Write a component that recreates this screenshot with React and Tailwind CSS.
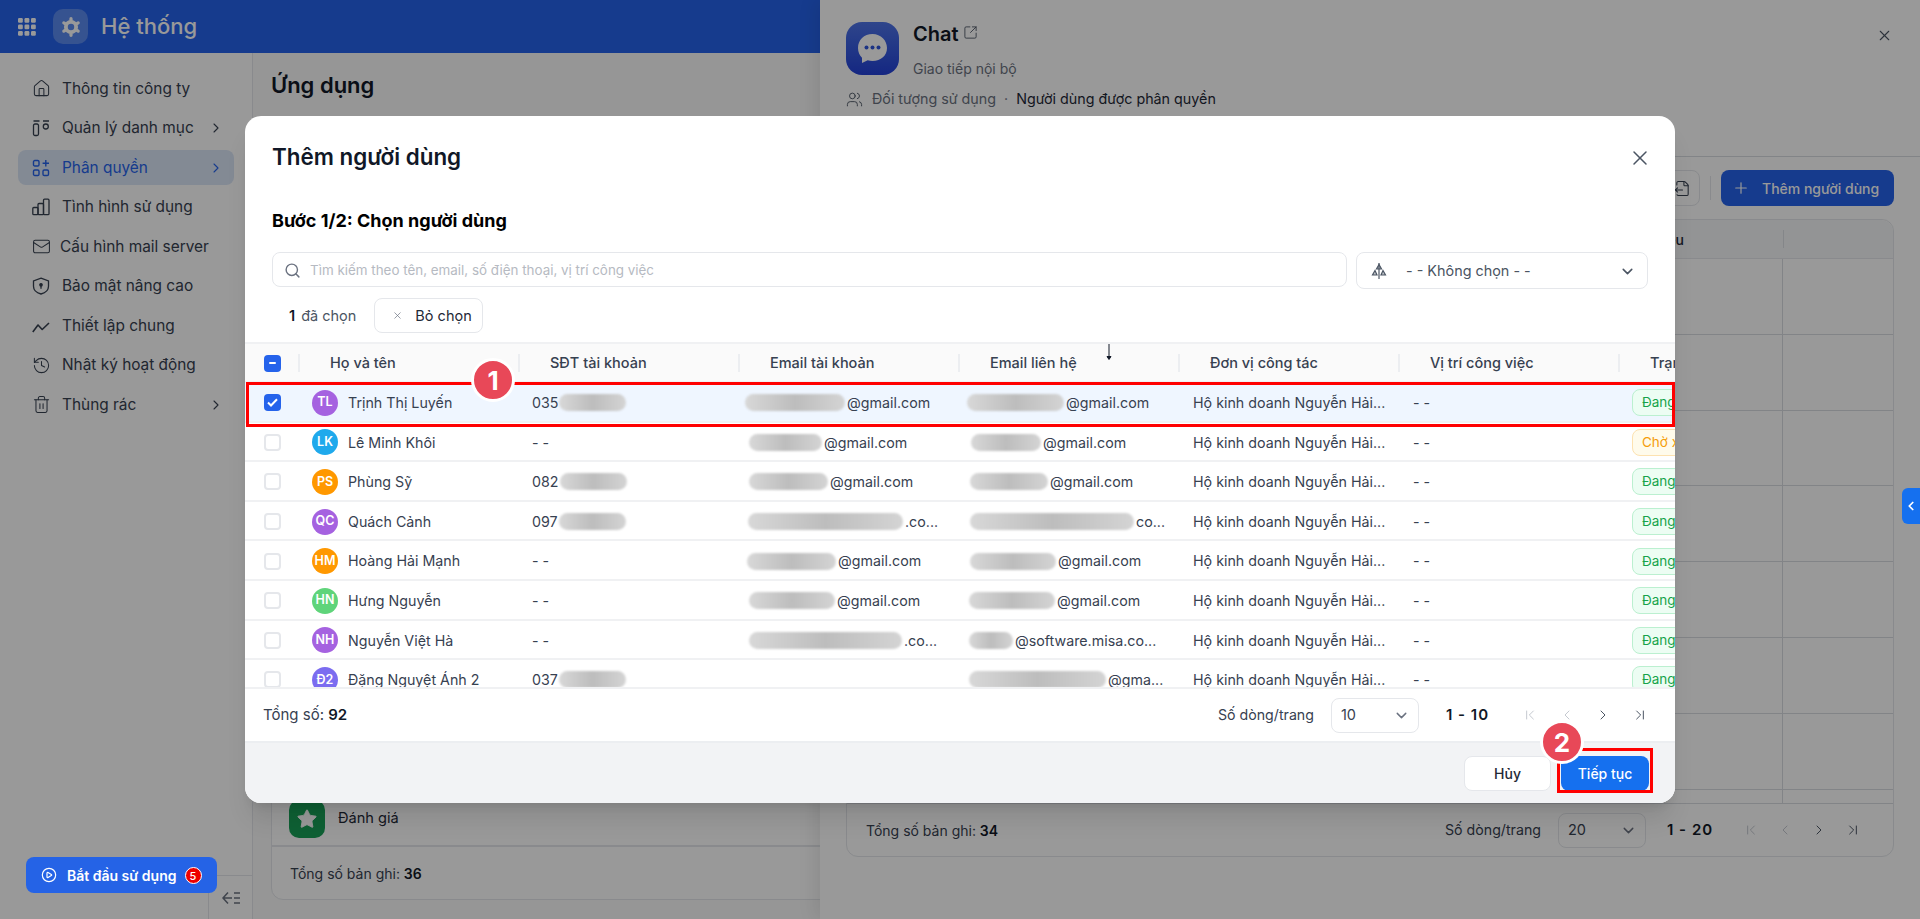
import {
  ChevronDown,
  ChevronFirst,
  ChevronLast,
  ChevronLeft,
  ChevronRight,
  CirclePlay,
  FileOutput,
  History,
  House,
  Mail,
  Plus,
  Search,
  SquareArrowOutUpRight,
  Star,
  Trash2,
  Users,
  X,
} from "lucide-react";

function GridDots() {
  return (
    <svg width="18" height="18" viewBox="0 0 18 18" fill="currentColor">
      {[0, 6.5, 13].map((y) =>
        [0, 6.5, 13].map((x) => <rect key={`${x}-${y}`} x={x} y={y} width="4.8" height="4.8" rx="1.2" />)
      )}
    </svg>
  );
}

function CatalogIcon() {
  return (
    <svg width="18" height="18" viewBox="0 0 18 18" fill="none" stroke="currentColor" strokeWidth="1.3">
      <path d="M1.5 2h6M11 2h6" />
      <rect x="1.5" y="5" width="5" height="11.5" rx="1.5" />
      <circle cx="13.8" cy="7.5" r="2.5" />
    </svg>
  );
}

function PermissionIcon() {
  return (
    <svg width="18" height="18" viewBox="0 0 18 18" fill="none" stroke="currentColor" strokeWidth="1.4">
      <rect x="1.5" y="1.5" width="5.5" height="5.5" rx="1.3" />
      <rect x="1.5" y="11" width="5.5" height="5.5" rx="1.3" />
      <rect x="11" y="11" width="5.5" height="5.5" rx="1.3" />
      <path d="M13.8 1v6.5M10.6 4.2h6.4" />
    </svg>
  );
}

function BarsIcon() {
  return (
    <svg width="18" height="18" viewBox="0 0 18 18" fill="none" stroke="currentColor" strokeWidth="1.3">
      <rect x="0.8" y="9.5" width="5.2" height="7.2" rx="1" />
      <rect x="6" y="5.5" width="5.5" height="11.2" rx="1" />
      <rect x="11.5" y="1.2" width="5.5" height="15.5" rx="1" />
    </svg>
  );
}

function ShieldIcon() {
  return (
    <svg width="18" height="18" viewBox="0 0 18 18" fill="none" stroke="currentColor" strokeWidth="1.3">
      <path d="M9 1.2 16.5 4v5.2c0 3.9-3.2 6.6-7.5 7.8-4.3-1.2-7.5-3.9-7.5-7.8V4z" />
      <circle cx="9" cy="7.8" r="1.2" fill="currentColor" />
      <path d="M9 8.5v3.2" />
    </svg>
  );
}

function TrendIcon() {
  return (
    <svg width="18" height="18" viewBox="0 0 18 18" fill="none" stroke="currentColor" strokeWidth="1.6" strokeLinejoin="round">
      <path d="M0.8 15 6 8l4.200 4.500 6.800-6.500" />
    </svg>
  );
}

function GearLogo() {
  return (
    <svg width="22" height="22" viewBox="0 0 24 24" fill="none" stroke="currentColor" strokeLinecap="round">
      <circle cx="12" cy="12" r="5.600" strokeWidth="4.200" />
      <path d="M12 3v1.500M12 19.500V21M4.200 7.500l1.300.75M18.500 15.750l1.300.75M4.200 16.500l1.300-.75M18.500 8.250l1.300-.75" strokeWidth="3.600" />
    </svg>
  );
}

function CollapseIcon() {
  return (
    <svg width="18" height="14" viewBox="0 0 18 14" fill="none" stroke="currentColor" strokeWidth="1.5">
      <path d="M6 1.5 1 7l5 5.5M1 7h9M12 2h6M12 7h6M12 12h6" />
    </svg>
  );
}

function ChatLogo() {
  return (
    <svg width="33" height="33" viewBox="0 0 33 33">
      <path d="M16.5 2C8 2 2 8 2 16c0 4 1.500 7.300 4 9.800V31l5.700-2.800c1.500.5 3.100.8 4.800.8 8.500 0 14.500-5.500 14.500-13S25 2 16.500 2z" fill="#fff" />
      <circle cx="10.500" cy="15.500" r="2" fill="#2f55dc" />
      <circle cx="16.500" cy="15.500" r="2" fill="#2f55dc" />
      <circle cx="22.500" cy="15.500" r="2" fill="#2f55dc" />
    </svg>
  );
}

function OrgIcon() {
  return (
    <svg width="16" height="18" viewBox="0 0 16 18" fill="none" stroke="currentColor" strokeWidth="1.2">
      <path d="M8 1v16" />
      <path d="M8 2.500 5.500 7h5zM4 8.500 1.500 13h4.500zM12 8.500 14.500 13H10z" fill="currentColor" fillOpacity=".35" />
    </svg>
  );
}

const menu = [
  { label: "Thông tin công ty", icon: <House size={19} strokeWidth={1.3} /> },
  { label: "Quản lý danh mục", icon: <CatalogIcon />, arrow: true },
  { label: "Phân quyền", icon: <PermissionIcon />, arrow: true, active: true },
  { label: "Tình hình sử dụng", icon: <BarsIcon /> },
  { label: "Cấu hình mail server", icon: <Mail size={19} strokeWidth={1.3} />, tight: true },
  { label: "Bảo mật nâng cao", icon: <ShieldIcon /> },
  { label: "Thiết lập chung", icon: <TrendIcon /> },
  { label: "Nhật ký hoạt động", icon: <History size={19} strokeWidth={1.3} /> },
  { label: "Thùng rác", icon: <Trash2 size={19} strokeWidth={1.3} />, arrow: true },
];

const users = [
  { initials: "TL", color: "bg-[#a562e0]", name: "Trịnh Thị Luyến", phone: "035", acc: [7, 100, "@gmail.com"], mail: [9, 97, "@gmail.com"], status: "Đang sử dụng", selected: true },
  { initials: "LK", color: "bg-[#1fa9ec]", name: "Lê Minh Khôi", acc: [11, 73, "@gmail.com"], mail: [13, 70, "@gmail.com"], status: "Chờ xác nhận" },
  { initials: "PS", color: "bg-[#ff9800]", name: "Phùng Sỹ", phone: "082", acc: [11, 79, "@gmail.com"], mail: [12, 78, "@gmail.com"], status: "Đang sử dụng" },
  { initials: "QC", color: "bg-[#a562e0]", name: "Quách Cảnh", phone: "097", acc: [10, 155, ".co..."], mail: [12, 164, "co..."], status: "Đang sử dụng" },
  { initials: "HM", color: "bg-[#ff9800]", name: "Hoàng Hải Mạnh", acc: [9, 89, "@gmail.com"], mail: [12, 86, "@gmail.com"], status: "Đang sử dụng" },
  { initials: "HN", color: "bg-[#5fd47a]", name: "Hưng Nguyễn", acc: [11, 86, "@gmail.com"], mail: [11, 86, "@gmail.com"], status: "Đang sử dụng" },
  { initials: "NH", color: "bg-[#a562e0]", name: "Nguyễn Việt Hà", acc: [11, 153, ".co..."], mail: [11, 44, "@software.misa.co..."], status: "Đang sử dụng" },
  { initials: "Đ2", color: "bg-[#7b6cf0]", name: "Đặng Nguyệt Ánh 2", phone: "037", mail: [11, 137, "@gma..."], status: "Đang sử dụng" },
];

const columns = ["Họ và tên", "SĐT tài khoản", "Email tài khoản", "Email liên hệ", "Đơn vị công tác", "Vị trí công việc", "Trạng thái"];

function Smudge({ left, width }) {
  return (
    <span
      className="inline-block h-[17px] shrink-0 rounded-full bg-gradient-to-r from-[#d8d8d8] via-[#bdbdbd] to-[#d4d4d4] blur-[1px]"
      style={{ marginLeft: left, width }}
    />
  );
}

function MailCell({ value }) {
  return (
    <div className="flex w-[220px] shrink-0 items-center">
      {value && (
        <>
          <Smudge left={value[0]} width={value[1]} />
          <span className="ml-0.5 whitespace-nowrap">{value[2]}</span>
        </>
      )}
    </div>
  );
}

function UserRow({ user }) {
  const waiting = user.status.startsWith("Chờ");
  return (
    <div className={`flex h-[39.6px] shrink-0 items-center border-b-2 border-[#f0f1f3] pt-[2px] text-[14.25px] text-[#374151] ${user.selected ? "bg-[#eff6ff]" : "bg-white"}`}>
      <div className="flex w-[53px] shrink-0 justify-center pl-[2px]">
        {user.selected ? (
          <span className="grid h-[17px] w-[17px] place-items-center rounded-[4px] bg-[#2563eb] text-white">
            <svg width="11" height="9" viewBox="0 0 11 9" fill="none" stroke="currentColor" strokeWidth="2">
              <path d="M1 4.500 4 7.500 10 1.200" />
            </svg>
          </span>
        ) : (
          <span className="h-[17px] w-[17px] rounded-[4px] border-2 border-[#e5e7eb] bg-white" />
        )}
      </div>
      <div className="flex w-[220px] shrink-0 items-center gap-[10px] pl-[14px]">
        <span className={`grid h-[26px] w-[26px] place-items-center rounded-full text-[12.5px] font-semibold text-white ${user.color}`}>{user.initials}</span>
        <span className="whitespace-nowrap">{user.name}</span>
      </div>
      <div className="flex w-[220px] shrink-0 items-center pl-[14px]">
        {user.phone ? (
          <>
            <span>{user.phone}</span>
            <Smudge left={1} width={67} />
          </>
        ) : (
          <span>- -</span>
        )}
      </div>
      <MailCell value={user.acc} />
      <MailCell value={user.mail} />
      <div className="w-[220px] shrink-0 whitespace-nowrap pl-[15px]">Hộ kinh doanh Nguyễn Hải...</div>
      <div className="w-[220px] shrink-0 pl-[15px]">- -</div>
      <div className="w-[220px] shrink-0 pl-[14px]">
        <span className={`inline-block h-[27px] whitespace-nowrap rounded-lg border px-[9px] text-[13.5px] leading-[25px] ${waiting ? "border-[#fde2b0] bg-[#fffbeb] text-[#f59e0b]" : "border-[#bbf0d0] bg-[#ecfdf3] text-[#16a34a]"}`}>
          {user.status}
        </span>
      </div>
    </div>
  );
}

function Pager({ range, value, rangeClass, iconClass }) {
  return (
    <div className="flex items-center">
      <span className="mr-[17px] text-[14.2px] text-[#374151]">Số dòng/trang</span>
      <div className="flex h-[35px] w-[88px] items-center justify-between rounded-lg border border-[#e5e7eb] bg-white pl-[9px] pr-[8px] text-[14.5px] text-[#374151]">
        {value}
        <ChevronDown size={17} className="text-[#6b7280]" />
      </div>
      <span className={`w-[46px] whitespace-nowrap text-[15px] font-semibold tracking-[1px] text-[#111827] ${rangeClass}`}>{range}</span>
      <div className={`flex items-center ${iconClass}`}>
        <ChevronFirst size={16} strokeWidth={1.5} className="text-[#c5c9d0]" />
        <ChevronLeft size={16} strokeWidth={1.5} className="text-[#c5c9d0]" />
        <ChevronRight size={16} strokeWidth={1.5} className="text-[#4b5563]" />
        <ChevronLast size={16} strokeWidth={1.5} className="text-[#4b5563]" />
      </div>
    </div>
  );
}

function Sidebar() {
  return (
    <aside className="relative flex w-[253px] shrink-0 flex-col border-r border-[#e5e7eb] bg-white pt-[18px]">
      <nav className="flex flex-col gap-[4.500px] px-[18px]">
        {menu.map((item) => (
          <div
            key={item.label}
            className={`flex h-[35px] items-center rounded-lg pl-[14px] pr-[10px] text-[15.4px] ${item.active ? "bg-[#dbe6f7] text-[#2563eb]" : "text-[#374151]"}`}
          >
            <span className="w-[18px] shrink-0">{item.icon}</span>
            <span className={item.tight ? "ml-[10px]" : "ml-[12px]"}>{item.label}</span>
            {item.arrow && <ChevronRight size={16} strokeWidth={1.6} className="ml-auto" />}
          </div>
        ))}
      </nav>
      <div className="mt-auto flex h-[44px] w-[44px] items-center justify-center self-end border-l border-t border-[#e5e7eb] text-[#6b7280]">
        <CollapseIcon />
      </div>
    </aside>
  );
}

function MainArea() {
  return (
    <main className="flex min-w-0 flex-1 flex-col bg-[#fafafa] pb-[19px] pl-[18px] pr-[20px] pt-[16px]">
      <h1 className="text-[22px] font-semibold leading-[32px] text-[#111827]">Ứng dụng</h1>
      <div className="mt-auto rounded-b-xl border border-[#e5e7eb] bg-white">
        <div className="flex h-[60px] items-center gap-[13px] border-b-2 border-[#e5e7eb] pl-[17px] pt-[6px]">
          <span className="grid h-[38px] w-[36px] place-items-center rounded-[10px] bg-[#18a058] text-white">
            <Star size={22} fill="currentColor" strokeWidth={1} />
          </span>
          <span className="text-[14.6px] text-[#1f2937]">Đánh giá</span>
        </div>
        <div className="flex h-[52px] items-center pl-[18px] text-[14px] text-[#374151]">
          Tổng số bản ghi:&nbsp;<b className="font-semibold text-[#111827]">36</b>
        </div>
      </div>
    </main>
  );
}

function ChatPanel() {
  return (
    <section className="absolute bottom-0 right-0 top-0 flex w-[1100px] flex-col bg-white shadow-[-6px_0_16px_rgba(0,0,0,0.08)]">
      <div className="relative h-[157px] shrink-0 border-b border-[#d9dce1] pl-[26px] pt-[22px]">
        <div className="flex">
          <div className="grid h-[53px] w-[53px] place-items-center rounded-[16px] bg-gradient-to-b from-[#4f74e8] to-[#2340d8]">
            <ChatLogo />
          </div>
          <div className="ml-[14px]">
            <div className="flex items-center gap-1 text-[20px] font-semibold leading-[24px] text-[#111827]">
              Chat
              <SquareArrowOutUpRight size={15} strokeWidth={1.4} className="mb-1 text-[#4b5563]" />
            </div>
            <div className="mt-[13px] text-[14px] leading-[20px] text-[#6b7280]">Giao tiếp nội bộ</div>
          </div>
        </div>
        <div className="mt-[10px] flex items-center text-[14.3px] leading-[20px]">
          <Users size={17} strokeWidth={1.3} className="mr-[9px] text-[#4b5563]" />
          <span className="text-[#6b7280]">Đối tượng sử dụng</span>
          <span className="mx-[8px] text-[#6b7280]">·</span>
          <span className="text-[#1f2937]">Người dùng được phân quyền</span>
        </div>
        <X size={17} strokeWidth={1.5} className="absolute right-[27px] top-[27px] text-[#4b5563]" />
      </div>
      <div className="flex h-[62px] shrink-0 items-start justify-end pr-[26px] pt-[13px]">
        <div className="grid h-[36px] w-[36px] place-items-center rounded-lg border border-[#e5e7eb] text-[#374151]">
          <FileOutput size={17} strokeWidth={1.5} />
        </div>
        <span className="mx-[10px] mt-[6px] h-[24px] w-px bg-[#e5e7eb]" />
        <div className="flex h-[36px] w-[173px] items-center rounded-lg bg-[#2563eb] pl-[11px] text-[14px] font-medium text-white">
          <Plus size={18} strokeWidth={1.6} />
          <span className="ml-[12px]">Thêm người dùng</span>
        </div>
      </div>
      <div className="mx-[26px] mb-[62px] flex min-h-0 flex-1 flex-col rounded-xl border border-[#e5e7eb]">
        <div className="flex h-[39px] shrink-0 items-center rounded-t-xl border-b border-[#e5e7eb] bg-[#f6f7f9]">
          <div className="w-[936px] pr-[99px] text-right text-[14px] font-medium text-[#1f2937]">Ngày hiệu</div>
          <span className="h-[18px] w-px bg-[#dcdfe4]" />
        </div>
        <div className="min-h-0 flex-1 overflow-hidden">
          {[0, 1, 2, 3, 4, 5, 6, 7].map((row) => (
            <div key={row} className="flex h-[75.800px] border-b border-[#d9dce1]">
              <div className="w-[936px] border-r border-[#d9dce1]" />
            </div>
          ))}
        </div>
        <div className="flex h-[53px] shrink-0 items-center justify-between border-t border-[#d9dce1] pl-[19px] pr-[32px]">
          <span className="text-[14px] text-[#374151]">
            Tổng số bản ghi: <b className="font-semibold text-[#111827]">34</b>
          </span>
          <Pager range="1 - 20" value="20" rangeClass="ml-[21px] mr-[30px]" iconClass="gap-[18px]" />
        </div>
      </div>
    </section>
  );
}

function AddUserModal() {
  return (
    <section className="absolute left-[245px] top-[116px] z-20 flex h-[687px] w-[1430px] flex-col overflow-hidden rounded-[16px] bg-white shadow-xl">
      <div className="relative shrink-0 px-[27px] pt-[26px]">
        <h2 className="text-[22.4px] font-semibold leading-[30px] text-[#111827]">Thêm người dùng</h2>
        <X size={24} strokeWidth={1.5} className="absolute right-[23px] top-[30px] text-[#4b5563]" />
        <h3 className="mt-[37px] text-[18px] font-bold leading-[24px] text-black">Bước 1/2: Chọn người dùng</h3>
        <div className="mt-[19px] flex items-start gap-[9px]">
          <div className="flex h-[35px] flex-1 items-center rounded-lg border border-[#e5e7eb] pl-[11px] pt-px text-[13.4px] text-[#b6bac2]">
            <Search size={17} strokeWidth={2} className="mr-[9px] text-[#6b7280]" />
            Tìm kiếm theo tên, email, số điện thoại, vị trí công việc
          </div>
          <div className="flex h-[37px] w-[292px] items-center rounded-lg border border-[#e5e7eb] pl-[14px] pr-[11px] pt-px text-[14.4px] text-[#4b5563]">
            <OrgIcon />
            <span className="ml-[19px] whitespace-nowrap">- - Không chọn - -</span>
            <ChevronDown size={17} strokeWidth={2.2} className="ml-auto" />
          </div>
        </div>
        <div className="mt-[9px] flex h-[35px] items-center pl-[17px] text-[14.5px] text-[#4b5563]">
          <b className="font-semibold text-[#111827]">1</b>
          <span className="ml-1.5">đã chọn</span>
          <div className="ml-[18px] flex h-[35px] w-[109px] items-center rounded-lg border border-[#e5e7eb] pl-[17px] text-[#1f2937]">
            <X size={11} strokeWidth={1.5} className="mr-[12px] text-[#6b7280]" />
            Bỏ chọn
          </div>
        </div>
      </div>

      <div className="relative mt-[9px] flex h-[41px] shrink-0 items-center border-y-2 border-[#f0f1f3] bg-[#fafafa] pt-[1px] text-[14.5px] font-medium text-[#374151]">
        <div className="flex w-[53px] shrink-0 justify-center pl-[2px]">
          <span className="grid h-[17px] w-[17px] place-items-center rounded-[4px] bg-[#2563eb]">
            <span className="h-[2px] w-[7px] rounded bg-white" />
          </span>
        </div>
        {columns.map((title) => (
          <div key={title} className="flex h-[18px] w-[220px] shrink-0 items-center whitespace-nowrap border-l-2 border-[#eceef1] pl-[30px]">
            {title}
          </div>
        ))}
        <svg className="absolute left-[860px] top-[-1px]" width="8" height="18" viewBox="0 0 8 18" fill="none" stroke="#111827">
          <path d="M4 1v15" />
          <path d="M2 13.500 4 16.500 6 13.500z" fill="#111827" />
        </svg>
      </div>

      <div className="flex h-[304px] shrink-0 flex-col overflow-hidden">
        {users.map((user) => (
          <UserRow key={user.initials + user.name} user={user} />
        ))}
      </div>

      <div className="flex h-[54px] shrink-0 items-center justify-between border-t-2 border-[#f0f1f3] pl-[18px] pr-[27px]">
        <span className="text-[15px] text-[#374151]">
          Tổng số: <b className="font-semibold text-[#111827]">92</b>
        </span>
        <Pager range="1 - 10" value="10" rangeClass="ml-[27px] mr-[30px]" iconClass="gap-[20.7px]" />
      </div>

      <div className="flex flex-1 items-center justify-end gap-[10px] border-t-2 border-[#eceef1] bg-[#f2f3f5] pr-[26px]">
        <button className="h-[35px] w-[87px] rounded-lg border border-[#e5e7eb] bg-white text-[14px] font-medium text-[#1f2937]">Hủy</button>
        <button className="h-[35px] w-[88px] rounded-lg bg-[#1570ef] text-[14px] font-medium text-white">Tiếp tục</button>
      </div>

      <div className="absolute left-[1px] top-[266px] h-[45px] w-[1429px] border-[3px] border-[#ff0000]" />
      <div className="absolute left-[1312px] top-[632px] h-[45px] w-[96px] border-[3px] border-[#ff0000]" />
      <span className="absolute left-[226px] top-[242px] grid h-[44px] w-[44px] place-items-center rounded-full border-[3px] border-white bg-[#e84858] text-[26px] font-bold text-white">1</span>
      <span className="absolute left-[1295px] top-[604px] grid h-[44px] w-[44px] place-items-center rounded-full border-[3px] border-white bg-[#e84858] text-[26px] font-bold text-white">2</span>
    </section>
  );
}

export default function App() {
  return (
    <div className="relative flex h-[919px] w-full flex-col overflow-hidden bg-white font-['Inter',sans-serif]">
      <header className="flex h-[53px] shrink-0 items-center bg-[#2563eb] pl-[18px] text-white">
        <GridDots />
        <div className="ml-[17px] grid h-[35px] w-[35px] place-items-center rounded-[10px] bg-white/25">
          <GearLogo />
        </div>
        <span className="ml-[13px] text-[22px] font-medium">Hệ thống</span>
      </header>
      <div className="flex min-h-0 flex-1">
        <Sidebar />
        <MainArea />
      </div>
      <ChatPanel />

      <div className="absolute inset-0 z-10 bg-black/40" />
      <AddUserModal />

      <div className="absolute left-[26px] top-[857px] z-20 flex h-[36px] w-[191px] items-center rounded-lg bg-[#2563e6] pl-[15px] text-[14px] font-semibold text-white">
        <CirclePlay size={16} strokeWidth={1.8} />
        <span className="ml-[10px] whitespace-nowrap">Bắt đầu sử dụng</span>
        <span className="ml-[8px] grid h-[17px] w-[17px] place-items-center rounded-full border border-white bg-[#ee0000] text-[11px] font-medium">5</span>
      </div>
      <div className="absolute right-0 top-[488px] z-20 grid h-[36px] w-[18px] place-items-center rounded-l-md bg-[#1570ef] text-white">
        <ChevronLeft size={14} strokeWidth={3} />
      </div>
    </div>
  );
}
